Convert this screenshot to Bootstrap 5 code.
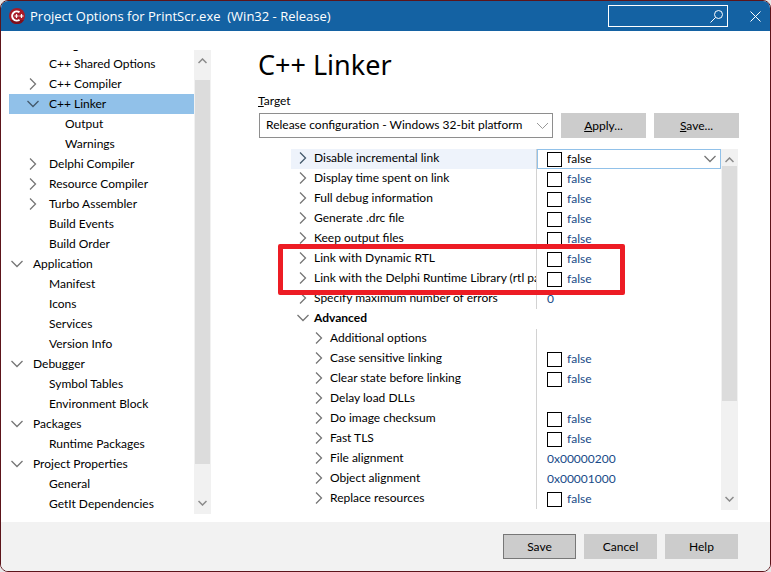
<!DOCTYPE html>
<html lang="en">
<head>
<meta charset="utf-8">
<meta name="viewport" content="width=device-width, initial-scale=1">
<title>Project Options for PrintScr.exe</title>
<link href="https://cdn.jsdelivr.net/npm/bootstrap@5.3.0/dist/css/bootstrap.min.css" rel="stylesheet">
<style>
  body { background: #e9e6e7; font-family: Lato, "Noto Sans", sans-serif; font-size: 12px; line-height: 20px; color: #000; }
  .dialog { border: 1px solid #5c141a; border-radius: 8px; background: #fff; }
  .titlebar { height: 30px; flex: none; background: #1462a3; color: #fff; padding: 0 9px 0 8px; }
  .title-text { font-family: "Open Sans", sans-serif; font-size: 13px; white-space: pre; margin-left: 5px; }
  .search { width: 120px; height: 22px; border: 1px solid #fff; margin-right: 22px; }
  .search input { background: transparent; border: 0; outline: 0; color: #fff; min-width: 0; }
  .icon-btn { background: none; border: 0; padding: 0; line-height: 0; color: inherit; }
  svg { display: block; fill: none; flex: none; }
  .workspace { padding: 8px 32px 8px 8px; min-height: 0; }
  .side { width: 202px; padding-top: 11px; }
  .tree { width: 185px; min-height: 0; overflow: hidden; }
  .tree a { display: flex; align-items: center; height: 20px; flex: none; color: #000; text-decoration: none; white-space: nowrap; }
  .tree .scrolled { font-family: "Noto Sans", sans-serif; }
  .tree svg, .opts svg { color: #767676; }
  .twist { width: 16px; flex: none; display: flex; justify-content: center; align-items: center; }
  .lv0 .twist, .lv1 .twist, .lv2 .twist { margin-right: 8px; }
  .lv1 { padding-left: 16px; }
  .lv2 { padding-left: 32px; }
  .tree a.current { background: #91c1e9; }
  .tree a.current svg { color: #44596b; }
  .sbar { width: 17px; background: #f1f1f1; flex: none; color: #8a8a8a; padding: 0 1px 0 0; }
  .cap { height: 30px; display: flex; justify-content: center; }
  .cap-short { height: 17px; }
  .track-below { height: 50px; }
  .track-long { height: 109px; }
  .thumb { background: #dcdcdc; margin-left: 1px; }
  .divider { width: 1px; background: #d6d6d6; margin-left: 15px; }
  .page { padding-left: 32px; min-width: 0; }
  h1 { font-family: "Noto Sans", sans-serif; font-size: 27px; line-height: 36px; margin: 8px 0; font-weight: 400; }
  .target { gap: 8px; margin: 2px -1px 0 1px; }
  .target select { appearance: none; height: 25px; border: 1px solid #8e8e8e; border-radius: 0; background: #fff url("data:image/svg+xml,%3Csvg xmlns='http://www.w3.org/2000/svg' width='13' height='8' fill='none' stroke='%23999'%3E%3Cpath d='M1 1l5.5 5.5L12 1'/%3E%3C/svg%3E") no-repeat right 3px center; padding: 0 20px 2px 6px; min-width: 0; color: #000; line-height: 20px; }
  .flat { height: 25px; width: 85px; border: 0; background: #ccc; color: #000; padding: 0; flex: none; }
  .grid-box { margin: 11px 0 4px 33px; position: relative; min-height: 0; }
  .opts { table-layout: fixed; width: 100%; border-collapse: separate; border-spacing: 0; }
  .opts th, .opts td { height: 20px; padding: 0; white-space: nowrap; overflow: hidden; font-weight: 400; }
  .opts th { width: 246px; border-right: 1px solid #d2d2d2; text-align: left; }
  .opts th > div { display: flex; align-items: center; height: 18px; margin-bottom: 2px; }
  .opts .twist { margin: 0 3px 0 4px; }
  .opts .deep .twist { margin-left: 20px; }
  .opts td { color: #174a88; padding-left: 10px; }
  .opts .group th { border-color: transparent; font-weight: 700; }
  .opts .active th { background: #eef3fb; }
  .opts .active td { border: 1px solid #91c1e9; color: #000; padding-left: 9px; }
  .opts .active svg { color: #44596b; }
  .opts .active td svg { color: #767676; }
  .tick { display: flex; align-items: center; gap: 5px; height: 20px; }
  .active .tick { height: 18px; }
  .tick input { appearance: none; width: 15px; height: 15px; border: 1px solid #000; margin: 0; background: #fff; flex: none; }
  .tick input:checked { background: #174a88; }
  .callout-frame { position: absolute; left: -13px; top: 95px; width: 347px; height: 51px; border: 5px solid #ed1c24; border-radius: 2px; pointer-events: none; }
  .actions { height: 49px; flex: none; background: #f2f2f2; padding: 0 32px 0 0; gap: 8px; }
  .actions .flat { width: 73px; }
  .actions .default { border: 1px solid #777; }
</style>
<script src="https://cdn.jsdelivr.net/npm/bootstrap@5.3.0/dist/js/bootstrap.bundle.min.js"></script>
</head>
<body>
<svg width="0" height="0" class="position-absolute" aria-hidden="true">
  <symbol id="right" viewBox="0 0 8 12"><path d="M1 .5l5.500 5.500L1 11.500" stroke="currentColor" stroke-width="1.300"/></symbol>
  <symbol id="down" viewBox="0 0 12 8"><path d="M.5 1L6 6.500L11.500 1" stroke="currentColor" stroke-width="1.300"/></symbol>
</svg>
<div class="dialog d-flex flex-column vh-100 overflow-hidden">
  <header class="titlebar d-flex align-items-center">
    <svg width="16" height="16" viewBox="0 0 16 16" role="img" aria-label="C++Builder">
      <circle cx="8" cy="8" r="8" fill="#a81b28"/>
      <path d="M1 12A8 8 0 0 0 15 12Z" fill="#7d101c"/>
      <path d="M10.500 4.300A4.600 4.600 0 1 0 10.500 11.700" stroke="#fff" stroke-width="2"/>
      <path d="M5.500 8h4M7.500 6v4M10.500 8h4M12.500 6v4" stroke="#fff" stroke-width="1.200"/>
    </svg>
    <span class="title-text">Project Options for PrintScr.exe  (Win32 - Release)</span>
    <div class="search d-flex align-items-center ms-auto">
      <input type="search" class="flex-fill" aria-label="Search options">
      <button class="icon-btn me-1" aria-label="Search"><svg width="13" height="13" viewBox="0 0 13 13" stroke="#fff"><circle cx="8.500" cy="4.500" r="4"/><path d="M5.500 7.500L.5 12.500"/></svg></button>
    </div>
    <button class="icon-btn" aria-label="Close"><svg width="11" height="11" viewBox="0 0 11 11" stroke="#fff"><path d="M.5 .5l10 10M10.500 .5l-10 10"/></svg></button>
  </header>

  <main class="workspace d-flex flex-fill">
    <div class="side d-flex">
      <nav class="tree d-flex flex-column justify-content-end" aria-label="Option pages">
        <a class="lv0 scrolled" href="#"><span class="twist"></span>Building</a>
        <a class="lv1" href="#"><span class="twist"></span>C++ Shared Options</a>
        <a class="lv1" href="#"><span class="twist"><svg width="8" height="12"><use href="#right"/></svg></span>C++ Compiler</a>
        <a class="lv1 current" href="#"><span class="twist"><svg width="12" height="8"><use href="#down"/></svg></span>C++ Linker</a>
        <a class="lv2" href="#"><span class="twist"></span>Output</a>
        <a class="lv2" href="#"><span class="twist"></span>Warnings</a>
        <a class="lv1" href="#"><span class="twist"><svg width="8" height="12"><use href="#right"/></svg></span>Delphi Compiler</a>
        <a class="lv1" href="#"><span class="twist"><svg width="8" height="12"><use href="#right"/></svg></span>Resource Compiler</a>
        <a class="lv1" href="#"><span class="twist"><svg width="8" height="12"><use href="#right"/></svg></span>Turbo Assembler</a>
        <a class="lv1" href="#"><span class="twist"></span>Build Events</a>
        <a class="lv1" href="#"><span class="twist"></span>Build Order</a>
        <a class="lv0" href="#"><span class="twist"><svg width="12" height="8"><use href="#down"/></svg></span>Application</a>
        <a class="lv1" href="#"><span class="twist"></span>Manifest</a>
        <a class="lv1" href="#"><span class="twist"></span>Icons</a>
        <a class="lv1" href="#"><span class="twist"></span>Services</a>
        <a class="lv1" href="#"><span class="twist"></span>Version Info</a>
        <a class="lv0" href="#"><span class="twist"><svg width="12" height="8"><use href="#down"/></svg></span>Debugger</a>
        <a class="lv1" href="#"><span class="twist"></span>Symbol Tables</a>
        <a class="lv1" href="#"><span class="twist"></span>Environment Block</a>
        <a class="lv0" href="#"><span class="twist"><svg width="12" height="8"><use href="#down"/></svg></span>Packages</a>
        <a class="lv1" href="#"><span class="twist"></span>Runtime Packages</a>
        <a class="lv0" href="#"><span class="twist"><svg width="12" height="8"><use href="#down"/></svg></span>Project Properties</a>
        <a class="lv1" href="#"><span class="twist"></span>General</a>
        <a class="lv1" href="#"><span class="twist"></span>GetIt Dependencies</a>
      </nav>
      <div class="sbar d-flex flex-column" aria-hidden="true">
        <div class="cap pt-1"><svg class="mt-1" width="9" height="6" viewBox="0 0 9 6"><path d="M.5 5l4-4l4 4" stroke="currentColor" stroke-width="1.500"/></svg></div>
        <div class="thumb flex-fill"></div>
        <div class="cap track-below align-items-end pb-1"><svg class="mb-1" width="9" height="6" viewBox="0 0 9 6"><path d="M.5 1l4 4l4-4" stroke="currentColor" stroke-width="1.500"/></svg></div>
      </div>
    </div>
    <div class="divider"></div>

    <section class="page d-flex flex-column flex-fill">
      <h1>C++ Linker</h1>
      <label for="target"><u>T</u>arget</label>
      <div class="target d-flex">
        <select id="target" class="flex-fill"><option>Release configuration - Windows 32-bit platform</option></select>
        <button class="flat"><u>A</u>pply...</button>
        <button class="flat"><u>S</u>ave...</button>
      </div>
      <div class="grid-box d-flex flex-fill">
        <div class="flex-fill overflow-hidden">
        <table class="opts">
          <tbody>
          <tr class="active"><th scope="row"><div><span class="twist"><svg width="8" height="12"><use href="#right"/></svg></span>Disable incremental link</div></th><td><label class="tick"><input type="checkbox">false<svg class="ms-auto me-1" width="12" height="8"><use href="#down"/></svg></label></td></tr>
          <tr><th scope="row"><div><span class="twist"><svg width="8" height="12"><use href="#right"/></svg></span>Display time spent on link</div></th><td><label class="tick"><input type="checkbox">false</label></td></tr>
          <tr><th scope="row"><div><span class="twist"><svg width="8" height="12"><use href="#right"/></svg></span>Full debug information</div></th><td><label class="tick"><input type="checkbox">false</label></td></tr>
          <tr><th scope="row"><div><span class="twist"><svg width="8" height="12"><use href="#right"/></svg></span>Generate .drc file</div></th><td><label class="tick"><input type="checkbox">false</label></td></tr>
          <tr><th scope="row"><div><span class="twist"><svg width="8" height="12"><use href="#right"/></svg></span>Keep output files</div></th><td><label class="tick"><input type="checkbox">false</label></td></tr>
          <tr><th scope="row"><div><span class="twist"><svg width="8" height="12"><use href="#right"/></svg></span>Link with Dynamic RTL</div></th><td><label class="tick"><input type="checkbox">false</label></td></tr>
          <tr><th scope="row"><div><span class="twist"><svg width="8" height="12"><use href="#right"/></svg></span>Link with the Delphi Runtime Library (rtl pa</div></th><td><label class="tick"><input type="checkbox">false</label></td></tr>
          <tr><th scope="row"><div><span class="twist"><svg width="8" height="12"><use href="#right"/></svg></span>Specify maximum number of errors</div></th><td>0</td></tr>
          <tr class="group"><th scope="row"><div><span class="twist"><svg width="12" height="8"><use href="#down"/></svg></span>Advanced</div></th><td></td></tr>
          <tr class="deep"><th scope="row"><div><span class="twist"><svg width="8" height="12"><use href="#right"/></svg></span>Additional options</div></th><td></td></tr>
          <tr class="deep"><th scope="row"><div><span class="twist"><svg width="8" height="12"><use href="#right"/></svg></span>Case sensitive linking</div></th><td><label class="tick"><input type="checkbox">false</label></td></tr>
          <tr class="deep"><th scope="row"><div><span class="twist"><svg width="8" height="12"><use href="#right"/></svg></span>Clear state before linking</div></th><td><label class="tick"><input type="checkbox">false</label></td></tr>
          <tr class="deep"><th scope="row"><div><span class="twist"><svg width="8" height="12"><use href="#right"/></svg></span>Delay load DLLs</div></th><td></td></tr>
          <tr class="deep"><th scope="row"><div><span class="twist"><svg width="8" height="12"><use href="#right"/></svg></span>Do image checksum</div></th><td><label class="tick"><input type="checkbox">false</label></td></tr>
          <tr class="deep"><th scope="row"><div><span class="twist"><svg width="8" height="12"><use href="#right"/></svg></span>Fast TLS</div></th><td><label class="tick"><input type="checkbox">false</label></td></tr>
          <tr class="deep"><th scope="row"><div><span class="twist"><svg width="8" height="12"><use href="#right"/></svg></span>File alignment</div></th><td>0x00000200</td></tr>
          <tr class="deep"><th scope="row"><div><span class="twist"><svg width="8" height="12"><use href="#right"/></svg></span>Object alignment</div></th><td>0x00001000</td></tr>
          <tr class="deep"><th scope="row"><div><span class="twist"><svg width="8" height="12"><use href="#right"/></svg></span>Replace resources</div></th><td><label class="tick"><input type="checkbox">false</label></td></tr>
          </tbody>
        </table>
        </div>
        <div class="sbar d-flex flex-column" aria-hidden="true">
          <div class="cap cap-short pt-1"><svg class="mt-1" width="9" height="6" viewBox="0 0 9 6"><path d="M.5 5l4-4l4 4" stroke="currentColor" stroke-width="1.500"/></svg></div>
          <div class="thumb flex-fill"></div>
          <div class="cap track-long align-items-end pb-1"><svg class="mb-1" width="9" height="6" viewBox="0 0 9 6"><path d="M.5 1l4 4l4-4" stroke="currentColor" stroke-width="1.500"/></svg></div>
        </div>
        <div class="callout-frame"></div>
      </div>
    </section>
  </main>

  <footer class="actions d-flex align-items-center justify-content-end">
    <button class="flat default">Save</button>
    <button class="flat">Cancel</button>
    <button class="flat">Help</button>
  </footer>
</div>
</body>
</html>
